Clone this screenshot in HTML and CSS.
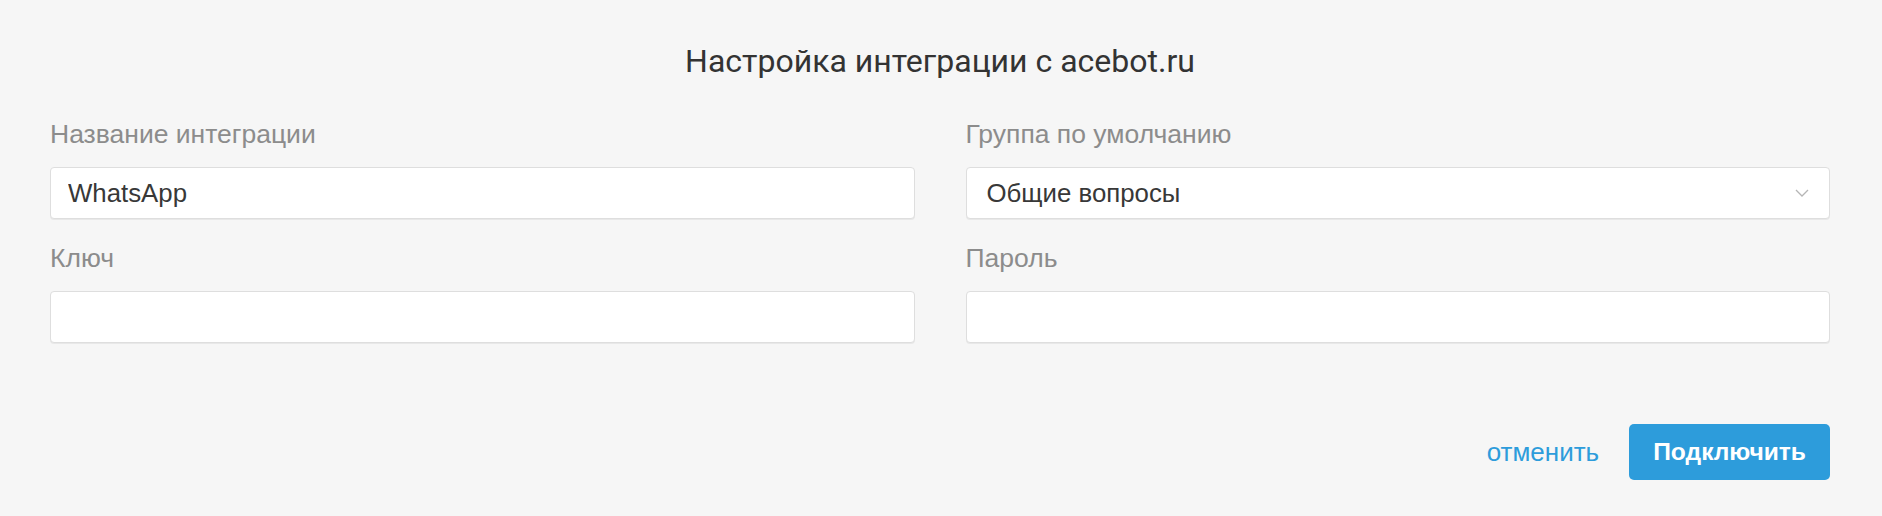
FILE: index.html
```html
<!DOCTYPE html>
<html lang="ru">
<head>
  <meta charset="UTF-8">
  <meta name="viewport" content="width=device-width, initial-scale=1.0">
  <title>Настройка интеграции</title>
  <link rel="stylesheet" href="styles.css">
</head>
<body>
  <div id="integration">
    <h2 class="title">Настройка интеграции с acebot.ru</h2>
    <div class="fields">
      <div class="field">
        <label for="name">Название интеграции</label>
        <input type="text" id="name" value="WhatsApp">
      </div>
      <div class="field">
        <label for="group">Группа по умолчанию</label>
        <div class="select" id="group">
          <span>Общие вопросы</span>
          <svg width="14" height="8" viewBox="0 0 14 8"><path d="M1 1l6 6 6-6" fill="none" stroke="#b5b5b5" stroke-width="1.3"/></svg>
        </div>
      </div>
      <div class="field">
        <label for="key">Ключ</label>
        <input type="text" id="key">
      </div>
      <div class="field">
        <label for="password">Пароль</label>
        <input type="password" id="password">
      </div>
    </div>
    <div class="actions">
      <button class="cancel">отменить</button>
      <button class="connect">Подключить</button>
    </div>
  </div>
</body>
</html>
```

FILE: styles.css
```css
body {
  margin: 0;
  font-family: Roboto, "Noto Sans", sans-serif;
  background-color: #f6f6f6;
  color: #333;
}

#integration {
  padding: 42px 52px 36px 50px;
}

.title {
  margin: 0;
  text-align: center;
  font-size: 32px;
  font-weight: 400;
  line-height: 38px;
  color: #333;
}

.fields {
  display: grid;
  grid-template-columns: 1fr 1fr;
  column-gap: 51px;
  row-gap: 26px;
  margin-top: 41px;
}

.field label {
  display: block;
  font-family: "Liberation Sans", Arial, sans-serif;
  font-size: 26.5px;
  line-height: 26px;
  color: #8c8c8c;
  margin-bottom: 20px;
}

.field input,
.select {
  box-sizing: border-box;
  width: 100%;
  height: 52px;
  padding: 0 17px;
  border: 1px solid #dedede;
  border-radius: 4px;
  box-shadow: 0 1px 0 #e8e8e8;
  background-color: #fff;
  font-family: "Liberation Sans", Arial, sans-serif;
  font-size: 25.8px;
  color: #383838;
  outline: none;
}

.select {
  display: flex;
  align-items: center;
  justify-content: space-between;
  padding: 0 20px;
}

.actions {
  display: flex;
  justify-content: flex-end;
  align-items: center;
  gap: 30px;
  margin-top: 81px;
}

.actions button {
  font-family: "Liberation Sans", Arial, sans-serif;
  cursor: pointer;
}

.cancel {
  padding: 0;
  border: none;
  background: none;
  color: #2d9cdb;
  font-size: 26px;
}

.connect {
  height: 56px;
  padding: 0 24px;
  border: none;
  border-radius: 5px;
  background-color: #2d9cdb;
  color: #fff;
  font-size: 24.6px;
  font-weight: 700;
}
```
